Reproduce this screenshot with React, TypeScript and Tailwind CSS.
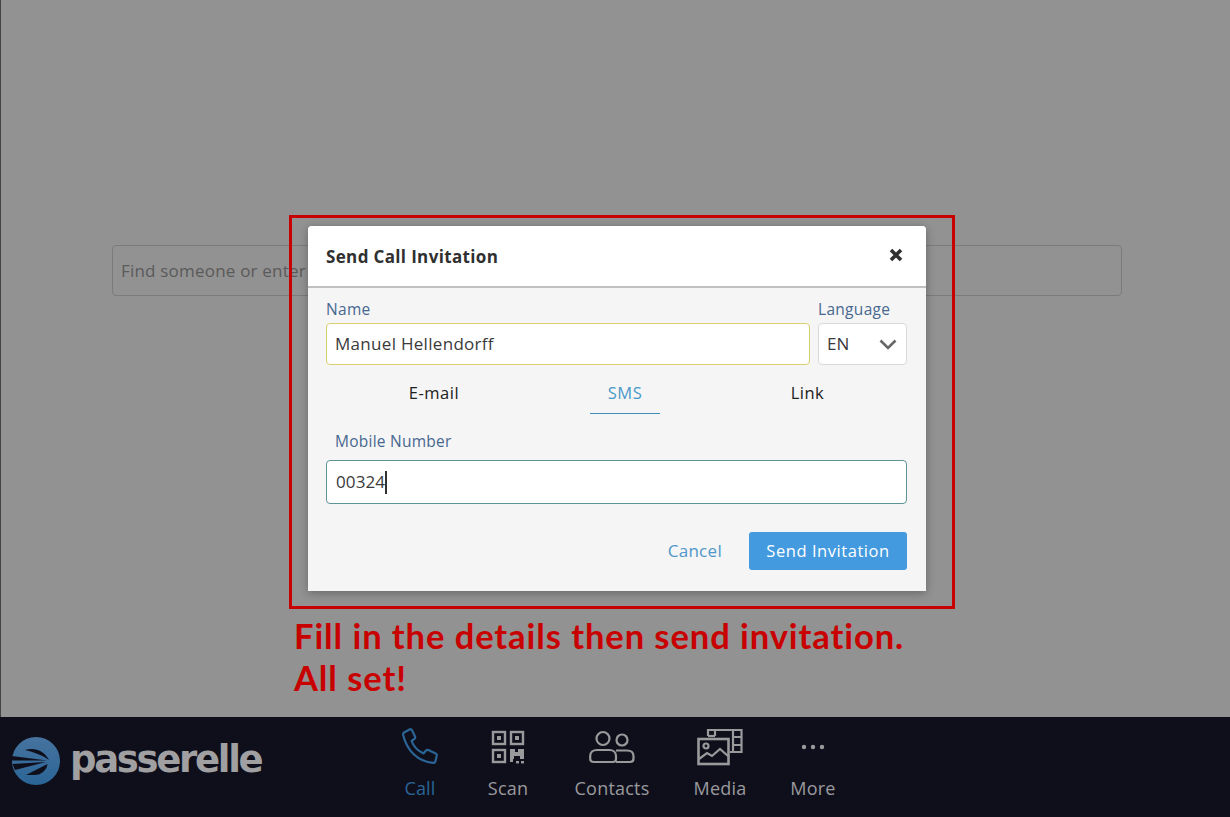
import React from "react";

const sans = "font-['Open_Sans',sans-serif]";

function PhoneIcon() {
  return (
    <svg width="38" height="38" viewBox="0 0 38 38" fill="none" stroke="#2a6596" strokeWidth="2.2" strokeLinejoin="round" strokeLinecap="round">
      <path d="M3 4.5 L8.5 1.5 C9.5 1 10.5 1.4 11 2.3 L14 8.5 C14.4 9.4 14.2 10.3 13.4 10.9 L10.6 13 C12.5 18.5 16.5 22.6 22.5 25.4 L25 22.6 C25.7 21.9 26.6 21.7 27.4 22.1 L34.6 25.6 C35.6 26.1 36 27.1 35.7 28 L34.4 33.4 C34.1 34.5 33.2 35 32.2 34.8 C16.5 33.5 6 22.5 2.2 7.2 C2 6 2.3 5 3 4.5 Z" />
    </svg>
  );
}

function QrIcon() {
  return (
    <svg width="34" height="34" viewBox="0 0 34 34" fill="none">
      <g stroke="#9a9a9c" strokeWidth="2.4">
        <rect x="2" y="2" width="12" height="12" />
        <rect x="20" y="2" width="12" height="12" />
        <rect x="2" y="20" width="12" height="12" />
      </g>
      <g fill="#9a9a9c">
        <rect x="6" y="6" width="4" height="4" />
        <rect x="24" y="6" width="4" height="4" />
        <rect x="6" y="24" width="4" height="4" />
        <path d="M19 19h5v3h3v-3h6v10h-4v-3h-6v3h-1v3h-3z" />
        <rect x="25" y="31" width="3" height="2.4" />
        <rect x="30" y="31" width="3" height="2.4" />
      </g>
    </svg>
  );
}

function ContactsIcon() {
  return (
    <svg width="46" height="34" viewBox="0 0 46 34" fill="none" stroke="#9a9a9c" strokeWidth="2.2">
      <circle cx="14" cy="8.5" r="6.5" />
      <circle cx="33" cy="10" r="5.5" />
      <path d="M5 32 H24 C26 32 27 31 27 29 V26 C27 22 24 20 20.5 20 H8 C4 20 1.2 22.5 1.2 26 V29 C1.2 31 3 32 5 32 Z" />
      <path d="M27 20.5 H38 C42 20.5 44.5 22.5 44.5 26 V28.5 C44.5 31 43 32 41 32 H27" />
    </svg>
  );
}

function MediaIcon() {
  return (
    <svg width="46" height="38" viewBox="0 0 46 38" fill="none" stroke="#9a9a9c" strokeWidth="2.2">
      <path d="M11 8 V2 H44.5 V24 H33" />
      <path d="M18 2 V8" />
      <path d="M36 2 V24" />
      <path d="M36 9 H44.5 M36 17 H44.5" />
      <path d="M11 8 H18" />
      <rect x="1.5" y="11" width="30" height="25" strokeWidth="2.6" />
      <circle cx="9" cy="18" r="2.5" />
      <path d="M2 31 L10 25 L15 28 L23 21 L31 28" />
    </svg>
  );
}

function DotsIcon() {
  return (
    <svg width="24" height="6" viewBox="0 0 24 6" fill="#9a9a9c">
      <circle cx="3" cy="3" r="2.2" />
      <circle cx="12" cy="3" r="2.2" />
      <circle cx="21" cy="3" r="2.2" />
    </svg>
  );
}

function LogoMark() {
  return (
    <svg width="48" height="48" viewBox="0 0 48 48">
      <defs>
        <linearGradient id="lg" x1="0" y1="0" x2="0" y2="1">
          <stop offset="0" stopColor="#47739f" />
          <stop offset="1" stopColor="#2a6596" />
        </linearGradient>
      </defs>
      <circle cx="24" cy="24" r="24" fill="url(#lg)" />
      <path d="M13 13 C22 10 32 13 37 23 C30 18 22 15 13 13 Z" fill="#0f0f1c" />
      <path d="M0 19 L35 23.4 L0 23.6 Z" fill="#0f0f1c" />
      <path d="M0.5 27 L34 25 L3 33 Z" fill="#0f0f1c" />
      <path d="M14 38 L35.5 27 C35 33 29 38 23 38 Z" fill="#0f0f1c" />
    </svg>
  );
}

function NavItem({ icon, label, active, w }: { icon: React.ReactNode; label: string; active?: boolean; w: string }) {
  return (
    <div className={`flex flex-col items-center ${w}`}>
      <div className="flex h-[40px] items-center justify-center">{icon}</div>
      <span className={`mt-[9px] text-[18px] leading-[24px] tracking-[0.2px] ${active ? "text-[#2a6596]" : "text-[#9a9a9c]"}`}>{label}</span>
    </div>
  );
}

export default function App() {
  return (
    <div className={`relative flex h-[817px] w-[1230px] flex-col overflow-hidden bg-[#929292] ${sans}`}>
      <div className="flex h-[717px] shrink-0 border-l border-[#444444] pl-[111px] pr-[108px] pt-[245px]">
        <div className="flex h-[51px] w-full items-center rounded border border-[#7a7c7c] pl-[8px] text-[17px] tracking-[0.2px] text-[#5a5a5a]">
          Find someone or enter
        </div>
      </div>

      <div className="flex h-[100px] shrink-0 items-start bg-[#0f0f1c]">
        <div className="ml-[12px] mt-[20px] flex items-center">
          <LogoMark />
          <span className="ml-[10px] mt-[-2px] font-['DejaVu_Sans',sans-serif] text-[37px] font-bold leading-[48px] tracking-[-2.3px] text-[#a0a0a2]">passerelle</span>
        </div>
        <div className="absolute left-[380px] top-[727px] flex">
          <NavItem w="w-[80px]" icon={<PhoneIcon />} label="Call" active />
          <NavItem w="w-[96px]" icon={<QrIcon />} label="Scan" />
          <NavItem w="w-[112px]" icon={<ContactsIcon />} label="Contacts" />
          <NavItem w="w-[104px]" icon={<MediaIcon />} label="Media" />
          <NavItem w="w-[82px]" icon={<DotsIcon />} label="More" />
        </div>
      </div>

      <div className="absolute left-[289px] top-[215px] h-[394px] w-[666px] border-[3px] border-[#c80000]" />

      <div className="absolute left-[308px] top-[226px] w-[618px] overflow-hidden rounded-t-[4px] bg-[#f5f5f5] shadow-[0_2px_10px_rgba(0,0,0,0.3)]">
        <div className="flex h-[62px] items-center justify-between border-b-2 border-[#c0c0c0] bg-white pl-[18px] pr-[23px]">
          <span className="pt-[1px] text-[17px] font-bold tracking-[0.35px] text-[#303030]">Send Call Invitation</span>
          <svg width="14" height="14" viewBox="0 0 14 14" stroke="#303030" strokeWidth="3.6" className="mb-[3px]">
            <path d="M2 2 L12 12 M12 2 L2 12" />
          </svg>
        </div>

        <div className="pl-[18px] pr-[19px]">
          <div className="mt-[10px] flex gap-[8px]">
            <div className="w-[484px]">
              <div className="text-[15.5px] leading-[22px] tracking-[0.3px] text-[#47688f]">Name</div>
              <div className="mt-[3px] flex h-[42px] items-center rounded border border-[#d8cf6a] bg-white pl-[8px] text-[17px] tracking-[0.3px] text-[#3a3a3a]">
                Manuel Hellendorff
              </div>
            </div>
            <div className="w-[89px]">
              <div className="text-[15.5px] leading-[22px] tracking-[0.3px] text-[#47688f]">Language</div>
              <div className="mt-[3px] flex h-[42px] items-center justify-between rounded border border-[#d9d9d9] bg-white pl-[8px] pr-[9px] text-[17px] text-[#3a3a3a]">
                EN
                <svg width="18" height="11" viewBox="0 0 18 11" fill="none" stroke="#666666" strokeWidth="2.6">
                  <path d="M1.5 1.5 L9 9 L16.5 1.5" />
                </svg>
              </div>
            </div>
          </div>

          <div className="mt-[14px] grid h-[35px] grid-cols-[216px_166px_199px] text-center text-[16.5px] tracking-[0.5px] text-[#202020]">
            <div className="pt-[2px]">E-mail</div>
            <div className="flex justify-center">
              <div className="h-[35px] w-[70px] border-b border-[#3f8fb8] pt-[2px] text-[#4a9ac9]">SMS</div>
            </div>
            <div className="pt-[2px]">Link</div>
          </div>

          <div className="mt-[16px] pl-[9px] text-[15.5px] leading-[22px] tracking-[0.25px] text-[#47688f]">Mobile Number</div>
          <div className="mt-[8px] flex h-[44px] items-center rounded border border-[#5f9496] bg-white pl-[9px] text-[17px] tracking-[0.1px] text-[#3a3a3a]">
            00324
            <span className="h-[23px] w-[2px] bg-[#303030]" />
          </div>

          <div className="mt-[28px] flex h-[38px] items-center justify-end">
            <span className="mr-[27px] text-[17px] tracking-[0.3px] text-[#4f97c9]">Cancel</span>
            <span className="flex h-[38px] w-[158px] items-center justify-center rounded-[3px] bg-[#449ade] text-[16.5px] tracking-[0.55px] text-white">Send Invitation</span>
          </div>
          <div className="h-[21px]" />
        </div>
      </div>

      <div className="absolute left-[294px] top-[615px] font-['Lato',sans-serif] text-[34.5px] font-bold leading-[42px] tracking-[0.93px] text-[#c80000]">
        <div>Fill in the details then send invitation.</div>
        <div>All set!</div>
      </div>
    </div>
  );
}
